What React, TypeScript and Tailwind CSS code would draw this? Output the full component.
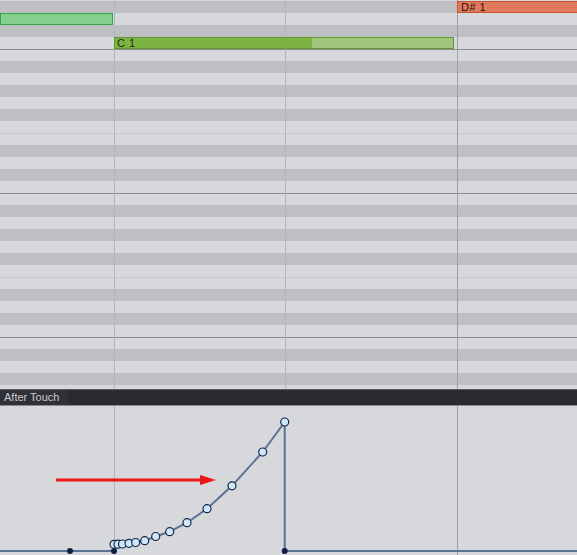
import React from "react";

const OCTAVE = ["D#", "D", "C#", "C", "B", "A#", "A", "G#", "G", "F#", "F", "E"];

function rowClass(name: string) {
  if (name.includes("#")) return "h-[12px] shrink-0 bg-[#bebfc3]";
  if (name === "B") return "h-[12px] shrink-0 bg-[#d7d8dc] border-t border-[#8b8c91]";
  if (name === "E") return "h-[12px] shrink-0 bg-[#d7d8dc] border-t border-[#c8c9cd]";
  return "h-[12px] shrink-0 bg-[#d7d8dc]";
}

function NoteGrid() {
  const rows = Array.from({ length: 33 }, (_, k) => OCTAVE[k % 12]);
  return (
    <div className="relative h-[389px] overflow-hidden">
      <div className="flex flex-col">
        <div className="h-px shrink-0 bg-[#d7d8dc]" />
        {rows.map((n, i) => (
          <div key={i} className={rowClass(n)} />
        ))}
      </div>
      {/* beat and bar lines */}
      <div className="absolute top-0 bottom-0 left-[114px] w-px bg-[#b4b5ba]" />
      <div className="absolute top-0 bottom-0 left-[285px] w-px bg-[#b4b5ba]" />
      <div className="absolute top-0 bottom-0 left-[457px] w-px bg-[#9d9ea3]" />
      {/* notes */}
      <div className="absolute left-0 top-[13px] h-[12px] w-[113px] border border-[#2fa64c] bg-[#84ce90]" />
      <div className="absolute left-[114px] top-[37px] h-[12px] w-[340px] flex border border-[#5f9a30] bg-[#a1c57c]">
        <div className="h-full w-[197px] bg-[#7cb342] flex items-center pl-[2px] text-[11px] leading-none tracking-[0.5px] text-[#1d2a12] [font-family:'Liberation_Sans',Arial,sans-serif]">
          C 1
        </div>
      </div>
      <div className="absolute left-[457px] top-px h-[12px] w-[130px] border border-[#c7522f] bg-[#e07a5c] flex items-center pl-[3px] text-[11px] leading-none tracking-[0.5px] text-[#2a0f08] [font-family:'Liberation_Sans',Arial,sans-serif]">
        D# 1
      </div>
    </div>
  );
}

const PTS: [number, number][] = [
  [114, 138.3],
  [118, 138.2],
  [122.5, 138],
  [129, 137.3],
  [135.7, 136.5],
  [144.7, 134.7],
  [155.7, 130.5],
  [169.7, 125.7],
  [187, 116.7],
  [207, 102.7],
  [232, 79.8],
  [262.7, 46],
  [284.7, 16],
];

function Automation() {
  const curve =
    "M 0 145 L 114 145 L " +
    PTS.map(([x, y]) => `${x} ${y}`).join(" L ") +
    " L 284.7 145 L 577 145";
  return (
    <div className="relative h-[149px] bg-[#d7d8dc] overflow-hidden">
      <div className="absolute top-0 bottom-0 left-[114px] w-px bg-[#b4b5ba]" />
      <div className="absolute top-0 bottom-0 left-[457px] w-px bg-[#9d9ea3]" />
      <svg className="absolute inset-0" width="577" height="149" viewBox="0 0 577 149">
        <path d={curve} fill="none" stroke="#5a7194" strokeWidth="2" strokeLinejoin="round" />
        {[70, 114, 284.7].map((x) => (
          <circle key={x} cx={x} cy={145} r={3} fill="#0e1f45" />
        ))}
        {PTS.map(([x, y], i) => (
          <circle key={i} cx={x} cy={y} r={4} fill="#cfe7fa" stroke="#142646" strokeWidth="1.2" />
        ))}
        <line x1="56" y1="74" x2="202" y2="74" stroke="#f01414" strokeWidth="3" />
        <polygon points="200,69 216,74 200,79" fill="#f01414" />
      </svg>
    </div>
  );
}

export default function App() {
  return (
    <div className="w-[577px] h-[555px] overflow-hidden bg-[#d7d8dc] flex flex-col">
      <NoteGrid />
      <div className="h-[17px] shrink-0 flex border-t border-[#5b5c61] border-b border-b-[#8a8b90] bg-[#2a2b2f]">
        <div className="w-[68px] h-full bg-[#303136] flex items-center pl-[4px] text-[11px] leading-none text-[#c9ccd3] [font-family:'Liberation_Sans',Arial,sans-serif]">
          After Touch
        </div>
      </div>
      <Automation />
    </div>
  );
}
